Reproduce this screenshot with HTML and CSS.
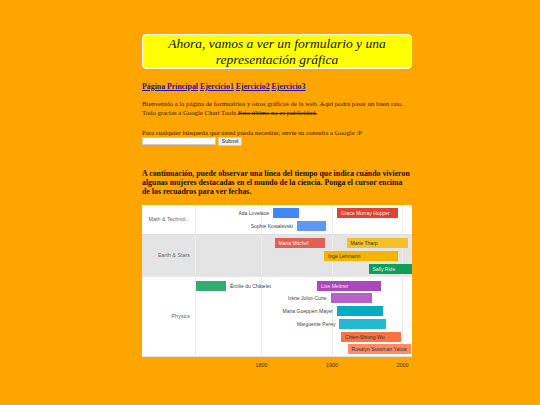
FILE: index.html
```
<!DOCTYPE html>
<html lang="es">
<head>
<meta charset="utf-8">
<title>Formulario</title>
<link rel="stylesheet" href="styles.css">
</head>
<body>
<main class="page">
<h1 class="title">Ahora, vamos a ver un formulario y una representación gráfica</h1>
<nav class="nav"><a href="#">Página Principal</a> <a href="#">Ejercicio1</a> <a href="#">Ejercicio2</a> <a href="#">Ejercicio3</a></nav>
<p class="intro">Bienvenido a la página de formualrios y otros gráficos de la web. Aquí podrá pasar un buen rato. Todo gracias a Google Chart Tools.<s class="struck">Esto último no es publicidad.</s></p>
<form class="search">
<p class="search-label">Para cualquier búsqueda que usted pueda necesitar, envíe su consulta a Google :P</p>
<div class="search-row"><input class="search-input" type="text"><button class="search-btn" type="button">Submit</button></div>
</form>
<p class="lead">A continuación, puede observar una línea del tiempo que indica cuándo vivieron algunas mujeres destacadas en el mundo de la ciencia. Ponga el cursor encima de los recuadros para ver fechas.</p>
<section class="chart">
<div class="row row-a"><div class="row-label">Math &amp; Technol...</div></div>
<div class="row row-b"><div class="row-label">Earth &amp; Stars</div></div>
<div class="row row-c"><div class="row-label">Physics</div></div>
<div class="axis"><span class="tick" style="left:119.5px">1800</span><span class="tick" style="left:190px">1900</span><span class="tick" style="left:260.5px">2000</span></div>
<i class="grid" style="left:53px"></i><i class="grid" style="left:119px"></i><i class="grid" style="left:190px"></i><i class="grid" style="left:260px"></i>

<div class="bar" style="left:130.5px;top:3.5px;width:26.5px;background:#4285f4"></div><span class="out" style="right:143px;top:3.5px">Ada Lovelace</span>
<div class="bar" style="left:154.5px;top:16px;width:29.5px;background:#5e97f5"></div><span class="out" style="right:119px;top:16px">Sophie Kowalevski</span>
<div class="bar light" style="left:195px;top:3.5px;width:60.5px;background:#db4437">Grace Murray Hopper</div>

<div class="bar light" style="left:132.5px;top:33.5px;width:50.5px;background:#e06055">Maria Mitchel</div>
<div class="bar" style="left:204.5px;top:33.5px;width:61px;background:#f6bf26">Marie Tharp</div>
<div class="bar" style="left:182px;top:46.5px;width:74px;background:#f4b400">Inge Lehmann</div>
<div class="bar light" style="left:226.5px;top:59.5px;width:43.5px;background:#0f9d58">Sally Ride</div>

<div class="bar" style="left:54px;top:76px;width:30px;background:#33ac71"></div><span class="out left" style="left:88px;top:76px">Émilie du Châtelet</span>
<div class="bar light" style="left:175px;top:76px;width:64px;background:#ab47bc">Lise Meitner</div>
<div class="bar" style="left:188.5px;top:88.7px;width:41.5px;background:#b762c6"></div><span class="out" style="right:85.5px;top:88.7px">Irène Joliot-Curie</span>
<div class="bar" style="left:194.7px;top:101.5px;width:46.3px;background:#00acc1"></div><span class="out" style="right:79px;top:101.5px">Maria Goeppert Mayer</span>
<div class="bar" style="left:197px;top:114px;width:46.5px;background:#26b8cd"></div><span class="out" style="right:76.5px;top:114px">Marguerite Perey</span>
<div class="bar" style="left:199px;top:127px;width:60px;background:#ff7043">Chien-Shiung Wu</div>
<div class="bar" style="left:205.5px;top:139.5px;width:63.5px;background:#ff8a65">Rosalyn Sussman Yalow</div>
</section>
</main>
</body>
</html>
```
FILE: styles.css
```
html, body { margin: 0; padding: 0; }
body {
  background: #ffa500;
  font-family: "Liberation Serif", "Times New Roman", serif;
  color: #1a1000;
}
.page { width: 270px; margin: 0 0 0 142px; padding: 34px 0 20px; }
.title {
  margin: 0;
  box-sizing: border-box;
  height: 35px;
  padding: 1px 12px 0;
  background: #ffff00;
  border: 1px solid #fff;
  border-radius: 4px;
  box-shadow: 0 0 1px #999;
  font-size: 13.5px;
  font-style: italic;
  font-weight: normal;
  line-height: 15.5px;
  text-align: center;
  color: #111;
}
.nav { margin-top: 13px; font-size: 7.85px; font-weight: bold; line-height: 10px; }
.nav a { color: #2b0f9a; }
.intro { margin: 7px 0 0; font-size: 6.75px; line-height: 9px; color: #3a1a00; }
.struck { margin-left: 0.4px; }
.search { margin: 11.5px 0 0; }
.search-label { margin: 0; font-size: 6.75px; line-height: 8px; color: #3a1a00; }
.search-row { display: flex; align-items: center; gap: 2px; margin-top: 0; }
.search-input { box-sizing: border-box; width: 74px; height: 8px; padding: 0; border: 1px solid #ccc; background: #fff; }
.search-btn { box-sizing: border-box; width: 24px; height: 9px; padding: 0; border: 1px solid #ccc; border-radius: 1px; background: #efefef; font: 5.4px "Liberation Sans", sans-serif; color: #222; line-height: 7px; }
.lead { margin: 23px 0 0; font-size: 7.85px; font-weight: bold; line-height: 9.4px; color: #1a1000; }
.chart {
  position: relative;
  margin-top: 8px;
  height: 153px;
  font-family: "Liberation Sans", Arial, sans-serif;
  font-size: 5.06px;
  color: #444;
}
.row { display: flex; align-items: center; box-sizing: border-box; }
.row-a { height: 30px; background: #fff; border-bottom: 1px solid #e0e0e0; }
.row-b { height: 42px; background: #e4e4e4; border-bottom: 1px solid #e8e8e8; }
.row-c { height: 80px; background: #fff; border-bottom: 1px solid #e0e0e0; }
.row-label { width: 48px; text-align: right; white-space: nowrap; color: #666; font-size: 5.4px; }
.axis { position: relative; height: 12px; }
.tick { position: absolute; top: 5px; transform: translateX(-50%); color: #333; font-size: 5.4px; }
.grid { position: absolute; top: 0; height: 152px; width: 1px; background: #ececec; }
.bar {
  position: absolute;
  box-sizing: border-box;
  height: 10px;
  padding-left: 4px;
  line-height: 10px;
  white-space: nowrap;
  overflow: hidden;
  color: #333;
  z-index: 1;
}
.light { color: #f3e8e8; }
.out { position: absolute; line-height: 10px; white-space: nowrap; color: #444; z-index: 1; }
```
